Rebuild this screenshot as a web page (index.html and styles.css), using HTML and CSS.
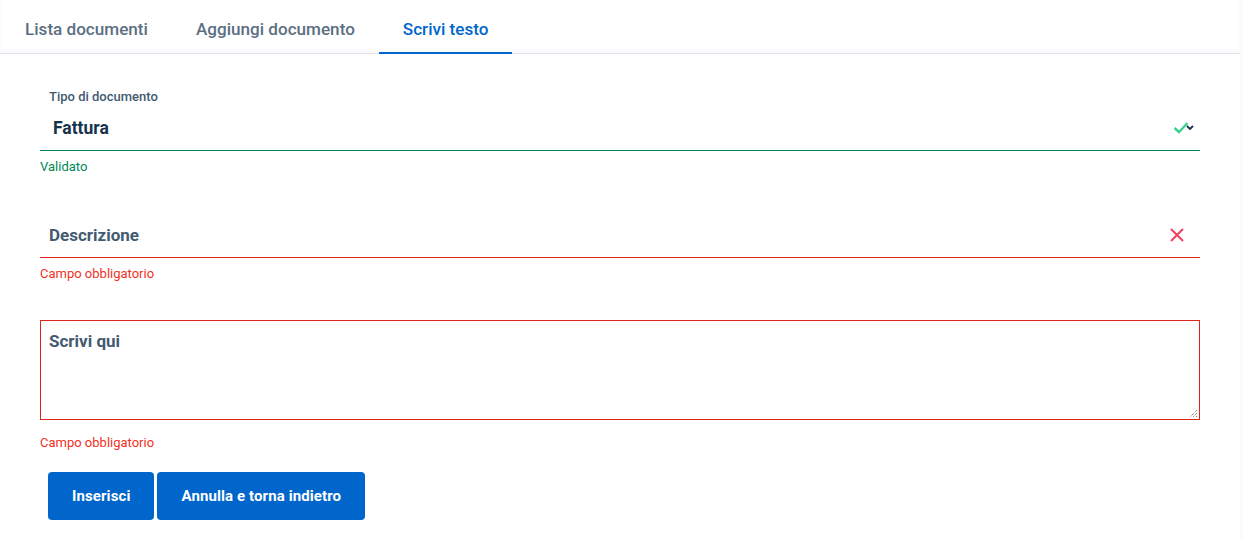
FILE: index.html
```html
<!DOCTYPE html>
<html lang="it">
<head>
<meta charset="utf-8">
<title>Scrivi testo</title>
<link rel="stylesheet" href="styles.css">
</head>
<body>
<div class="page">
  <nav class="tabs">
    <a class="tab">Lista documenti</a>
    <a class="tab">Aggiungi documento</a>
    <a class="tab active">Scrivi testo</a>
  </nav>
  <form class="form">
    <div class="field field-select">
      <label class="label">Tipo di documento</label>
      <div class="control valid">
        <span class="value">Fattura</span>
        <svg class="icon-check" width="24" height="14" viewBox="0 0 24 14">
          <path d="M1.5 8 L6 12 L14.5 3" fill="none" stroke="#3fcf8e" stroke-width="2.4"/>
          <path d="M14 6 L17 9 L20 6" fill="none" stroke="#17324d" stroke-width="1.8"/>
        </svg>
      </div>
      <div class="feedback ok">Validato</div>
    </div>
    <div class="field field-text">
      <div class="control invalid">
        <span class="value muted">Descrizione</span>
        <svg class="icon-x" width="16" height="16" viewBox="0 0 16 16">
          <path d="M2 2 L14 14 M14 2 L2 14" stroke="#f0415f" stroke-width="2"/>
        </svg>
      </div>
      <div class="feedback err">Campo obbligatorio</div>
    </div>
    <div class="field field-area">
      <div class="area">
        <span class="value muted">Scrivi qui</span>
        <svg class="grip" width="10" height="10" viewBox="0 0 10 10">
          <path d="M9 2 L2 9 M9 5 L5 9 M9 8 L8 9" stroke="#555" stroke-width="1" stroke-dasharray="1 1"/>
        </svg>
      </div>
      <div class="feedback err">Campo obbligatorio</div>
    </div>
    <div class="actions">
      <button type="button" class="btn">Inserisci</button>
      <button type="button" class="btn">Annulla e torna indietro</button>
    </div>
  </form>
</div>
</body>
</html>
```
FILE: styles.css
```css
* { box-sizing: border-box; }
html, body { margin: 0; padding: 0; background: #fff; }
body {
  font-family: "Roboto", "Liberation Sans", sans-serif;
  color: #17324d;
  width: 1244px;
  height: 541px;
  overflow: hidden;
}
.page {
  width: 1240px;
  height: 541px;
  box-shadow: 0 0 6px rgba(0,0,0,0.06);
}
.tabs {
  display: flex;
  height: 54px;
  border-bottom: 1px solid #dfe5ee;
  padding-left: 1px;
  box-shadow: 0 -2px 4px rgba(0,0,0,0.04) inset;
}
.tab {
  display: flex;
  align-items: center;
  padding: 6px 24px 0 24px;
  font-size: 17.1px;
  font-weight: 500;
  color: #5c6f82;
  border-bottom: 2px solid transparent;
  margin-bottom: -1px;
}
.tab.active {
  color: #0066cc;
  border-bottom-color: #0066cc;
}
.form {
  padding: 34px 40px 0 40px;
  display: flex;
  flex-direction: column;
}
.field { display: flex; flex-direction: column; }
.label {
  font-size: 13px;
  font-weight: 500;
  color: #435a70;
  padding-left: 9px;
  height: 18px;
  line-height: 18px;
}
.control {
  display: flex;
  align-items: center;
  justify-content: space-between;
  height: 45px;
}
.control.valid { border-bottom: 1px solid #008758; padding: 0 3px 0 13px; }
.control.invalid { border-bottom: 1px solid #e0231b; padding: 0 15px 0 9px; }
.value {
  font-size: 17.5px;
  font-weight: 700;
  color: #17324d;
}
.value.muted { color: #435a70; font-size: 17px; }
.icon-check { margin-top: -2px; }
.feedback {
  font-size: 13px;
  height: 32px;
  line-height: 32px;
}
.feedback.ok { color: #008758; }
.feedback.err { color: #f2301f; }
.field-text { margin-top: 30px; }
.field-area { margin-top: 30px; }
.area {
  position: relative;
  height: 100px;
  border: 1px solid #e0231b;
  padding: 10px 8px;
}
.grip { position: absolute; right: 1px; bottom: 1px; }
.field-area .feedback { height: 46px; line-height: 46px; }
.actions {
  display: flex;
  gap: 3px;
  padding-left: 8px;
  margin-top: 6px;
}
.btn {
  height: 48px;
  border: none;
  border-radius: 4px;
  background: #0066cc;
  color: #fff;
  font-family: inherit;
  font-size: 15px;
  font-weight: 700;
  letter-spacing: 0.1px;
  padding: 0 24px;
}
```
